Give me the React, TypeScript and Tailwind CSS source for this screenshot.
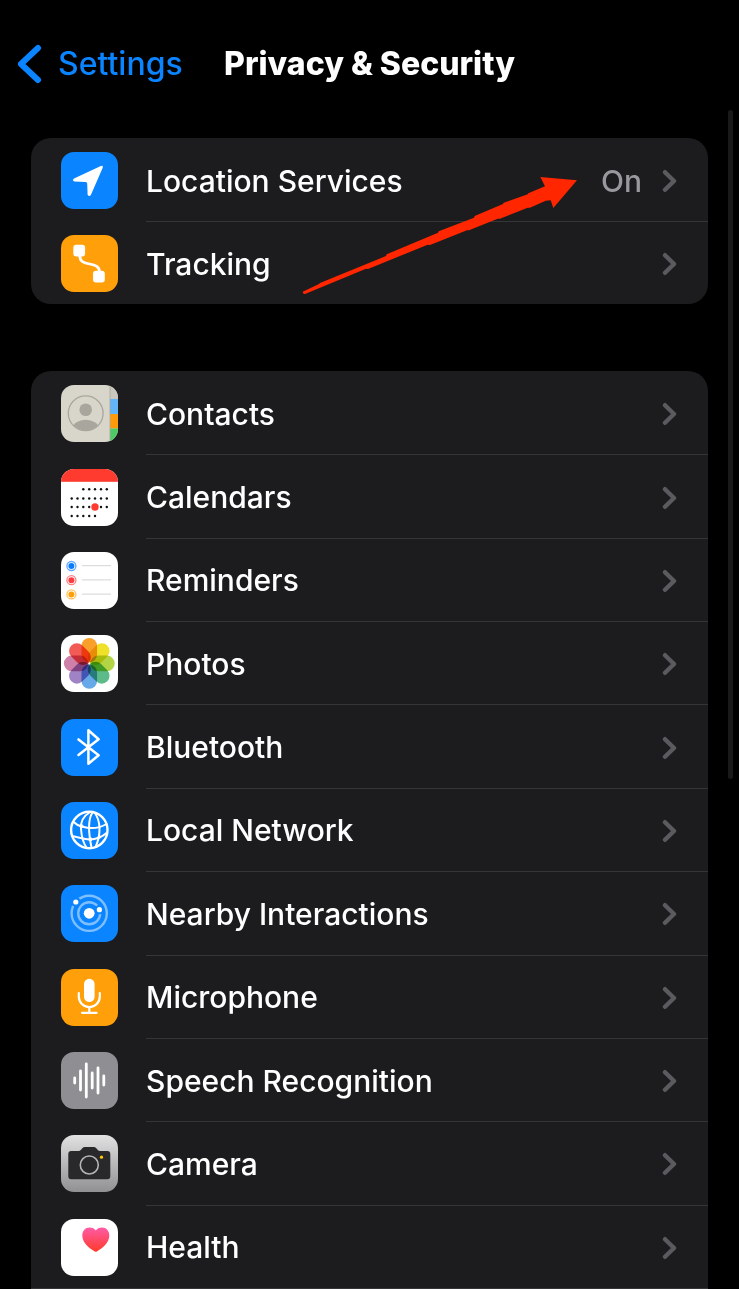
import React from "react";

type IconProps = { className?: string; children: React.ReactNode };

const AppIcon: React.FC<IconProps> = ({ className = "", children }) => (
  <span className={`block size-[57px] shrink-0 overflow-hidden rounded-[13px] ${className}`}>
    <svg viewBox="0 0 57 57" className="block size-full" fill="none" aria-hidden="true">
      {children}
    </svg>
  </span>
);

const LocationIcon = () => (
  <AppIcon className="bg-[#0a84ff]">
    <path
      d="M13 26.4 39.8 14Q42.8 13 41.6 16L30 42.8Q28.3 45.2 26.6 42.8L26.2 31.6Q26.1 30 24.6 29.9L13.4 29.5Q10.8 28.4 13 26.4Z"
      fill="#fff"
    />
  </AppIcon>
);

const TrackingIcon = () => (
  <AppIcon className="bg-[#ff9f0a]">
    <rect x="12.3" y="9.7" width="11.8" height="11.8" rx="3" fill="#fff" />
    <rect x="32" y="35.7" width="11.8" height="11.8" rx="3" fill="#fff" />
    <path d="M18.8 21C18.8 33 38.5 25 38.5 37" stroke="#fff" strokeWidth="2.8" />
  </AppIcon>
);

const ContactsIcon = () => (
  <AppIcon className="bg-[#d8d5ca]">
    <clipPath id="contact-face">
      <circle cx="24.7" cy="28.3" r="17.3" />
    </clipPath>
    <rect x="49" width="8" height="14" fill="#c9c7be" />
    <rect x="49" y="14" width="8" height="15" fill="#62b5f8" />
    <rect x="49" y="29" width="8" height="14.5" fill="#ff9b0b" />
    <rect x="49" y="43.5" width="8" height="14" fill="#4fc965" />
    <path d="M49 0V57" stroke="#aaa79d" strokeWidth="0.8" />
    <g clipPath="url(#contact-face)" fill="#a9a69d">
      <circle cx="24.7" cy="24.7" r="6.3" />
      <ellipse cx="24.7" cy="43.4" rx="13" ry="8.7" />
    </g>
    <circle cx="24.7" cy="28.3" r="17.4" stroke="#a9a69d" strokeWidth="1.3" />
  </AppIcon>
);

const calendarColumns = [10.7, 16.5, 22.3, 28.2, 34, 40, 45.8];
const calendarRows = [
  { y: 20.3, from: 2, to: 6 },
  { y: 29.5, from: 0, to: 6 },
  { y: 38, from: 0, to: 6 },
  { y: 47, from: 0, to: 4 },
];

const CalendarIcon = () => (
  <AppIcon className="bg-white">
    <rect width="57" height="12.8" fill="#ff3b30" />
    {calendarRows.map((row) =>
      calendarColumns
        .slice(row.from, row.to + 1)
        .map((x) => <circle key={`${x}-${row.y}`} cx={x} cy={row.y} r="1.2" fill="#111" />)
    )}
    <circle cx="34" cy="38" r="3.7" fill="#ff3b30" />
  </AppIcon>
);

const RemindersIcon = () => (
  <AppIcon className="bg-white">
    {[
      { y: 14, color: "#0a7aff" },
      { y: 28.2, color: "#ff3b3f" },
      { y: 42.4, color: "#ff9f0a" },
    ].map(({ y, color }) => (
      <g key={y}>
        <circle cx="10.4" cy={y} r="4.5" stroke={color} strokeOpacity="0.65" strokeWidth="1.3" />
        <circle cx="10.4" cy={y} r="3" fill={color} />
        <path d={`M20.8 ${y - 0.3}H50`} stroke="#d4d4d6" />
      </g>
    ))}
  </AppIcon>
);

const petals = ["#f9a02b", "#efe12a", "#b3d444", "#5dbb89", "#66a8e8", "#9f83c4", "#cf80a8", "#f25a55"];

const PhotosIcon = () => (
  <AppIcon className="bg-white">
    {petals.map((color, i) => (
      <rect
        key={color}
        x="20.5"
        y="3"
        width="15.6"
        height="24.4"
        rx="7.8"
        fill={color}
        transform={`rotate(${i * 45} 28.3 28.4)`}
        className="mix-blend-multiply"
      />
    ))}
  </AppIcon>
);

const BluetoothIcon = () => (
  <AppIcon className="bg-[#0a84ff]">
    <path
      d="M17.5 20.4 37.6 36.2 27.4 44.8V11.2L37.6 20.2 17.5 36"
      stroke="#fff"
      strokeWidth="2.5"
      strokeLinecap="round"
      strokeLinejoin="round"
    />
  </AppIcon>
);

const NetworkIcon = () => (
  <AppIcon className="bg-[#0a84ff]">
    <g stroke="#fff" strokeWidth="2">
      <circle cx="28.3" cy="28" r="18.2" strokeWidth="2.4" />
      <path d="M28.5 10.5C22.5 14 19.5 20 20 27 20.5 34 21.5 40 25.5 45.5" />
      <path d="M31.5 10.5C26.5 18 27.5 31 30.5 45.5" />
      <path d="M33.5 10.5C40 19 40 33 34.5 45" />
      <path d="M12 19.5Q16 23.5 21 24.5C29 27 38 26.5 45.5 22" />
      <path d="M11 34C19 35.5 24 38 30 37.5S41 35 45.5 31" />
    </g>
    <circle cx="20.5" cy="24.3" r="2" fill="#fff" />
    <circle cx="29.3" cy="37.3" r="2" fill="#fff" />
    <circle cx="38.3" cy="35" r="1.7" fill="#fff" />
  </AppIcon>
);

const NearbyIcon = () => (
  <AppIcon className="bg-[#0a84ff]">
    <circle cx="28.2" cy="28.3" r="17.6" stroke="#7fbfff" strokeWidth="2.4" />
    <circle cx="28.2" cy="28.3" r="11" stroke="#7fbfff" strokeWidth="2.4" />
    <circle cx="14.8" cy="17" r="4.8" fill="#0a84ff" />
    <circle cx="38.4" cy="24.7" r="4.6" fill="#0a84ff" />
    <circle cx="28.2" cy="28.3" r="5.4" fill="#fff" />
    <circle cx="14.8" cy="17" r="2.6" fill="#fff" />
    <circle cx="38.4" cy="24.7" r="2.6" fill="#fff" />
  </AppIcon>
);

const MicrophoneIcon = () => (
  <AppIcon className="bg-[#ff9f0a]">
    <rect x="23" y="9.7" width="10.6" height="23.3" rx="5.3" fill="#fff" />
    <path
      d="M17.8 24V27.5A10.5 10.5 0 0 0 38.8 27.5V24M28.3 38V43.6M21 43.8H35.6"
      stroke="#fff"
      strokeWidth="2.2"
      strokeLinecap="round"
    />
  </AppIcon>
);

const SpeechIcon = () => (
  <AppIcon className="bg-[#8e8e93]">
    <path
      d="M13.7 26V31M19.5 19V38M25.3 11.8V45M31.2 21V36M37 15.8V41M42.8 24V33"
      stroke="#fff"
      strokeWidth="2.8"
      strokeLinecap="round"
    />
  </AppIcon>
);

const CameraIcon = () => (
  <AppIcon className="bg-linear-to-b from-[#e2e2e3] to-[#919193]">
    <path
      d="M10.3 16H17.5Q19 16 20 14.8L21.3 13.2Q22.3 12 24 12H32.6Q34.3 12 35.3 13.2L36.6 14.8Q37.6 16 39 16H46.3Q49.3 16 49.3 19V41.3Q49.3 44.3 46.3 44.3H10.3Q7.3 44.3 7.3 41.3V19Q7.3 16 10.3 16Z"
      fill="#29292b"
    />
    <circle cx="28.3" cy="30" r="9" stroke="#b4b4b6" strokeWidth="1.6" />
    <circle cx="40.5" cy="22.2" r="1.6" fill="#ffc800" />
  </AppIcon>
);

const HealthIcon = () => (
  <AppIcon className="bg-white">
    <linearGradient id="heart" x1="0" y1="0" x2="0" y2="1">
      <stop stopColor="#ff5ba6" />
      <stop offset="1" stopColor="#ff3a2a" />
    </linearGradient>
    <path
      d="M34.8 11.4C36.6 9.2 38.8 8.6 41 8.6 45.4 8.6 48.3 12 48.3 16.6 48.3 23.5 42 29 35.8 32.5Q34.8 33 33.8 32.5C27.6 29 21.3 23.5 21.3 16.6 21.3 12 24.2 8.6 28.6 8.6 30.8 8.6 33 9.2 34.8 11.4Z"
      fill="url(#heart)"
    />
  </AppIcon>
);

const Chevron = () => (
  <svg viewBox="0 0 15 24" className="h-6 w-[15px] shrink-0" fill="none" aria-hidden="true">
    <path d="M3 3.2 12 12 3 20.8" stroke="#5b5b5f" strokeWidth="4.4" strokeLinecap="round" strokeLinejoin="round" />
  </svg>
);

type RowProps = { icon: React.ReactNode; label: string; value?: string };

const SettingsRow: React.FC<RowProps> = ({ icon, label, value }) => (
  <li className="group flex min-h-[83px] flex-1">
    <a href="#" className="flex flex-1 items-stretch gap-7 pl-[30px]">
      <span className="flex items-center pt-0.5">{icon}</span>
      <span className="flex flex-1 items-center border-t border-[#353538] pt-0.5 pr-[31px] group-first:border-transparent">
        <span className="flex-1 text-[30px] font-medium text-white">{label}</span>
        {value && <span className="mr-5 text-[30px] font-medium text-[#98989d]">{value}</span>}
        <Chevron />
      </span>
    </a>
  </li>
);

const access: RowProps[] = [
  { icon: <LocationIcon />, label: "Location Services", value: "On" },
  { icon: <TrackingIcon />, label: "Tracking" },
];

const apps: RowProps[] = [
  { icon: <ContactsIcon />, label: "Contacts" },
  { icon: <CalendarIcon />, label: "Calendars" },
  { icon: <RemindersIcon />, label: "Reminders" },
  { icon: <PhotosIcon />, label: "Photos" },
  { icon: <BluetoothIcon />, label: "Bluetooth" },
  { icon: <NetworkIcon />, label: "Local Network" },
  { icon: <NearbyIcon />, label: "Nearby Interactions" },
  { icon: <MicrophoneIcon />, label: "Microphone" },
  { icon: <SpeechIcon />, label: "Speech Recognition" },
  { icon: <CameraIcon />, label: "Camera" },
  { icon: <HealthIcon />, label: "Health" },
];

const App: React.FC = () => {
  return (
    <div className="relative flex min-h-screen flex-col bg-black font-['Inter',sans-serif]">
      <header className="grid grid-cols-[1fr_auto_1fr] items-center px-[17px] pt-10 pb-[50px]">
        <a href="#" className="flex items-center gap-4 text-[32px] leading-12 font-medium text-[#0a84ff]">
          <svg viewBox="0 0 25 40" className="h-10 w-[25px]" fill="none" aria-hidden="true">
            <path d="M21 4 4 20 21 36" stroke="currentColor" strokeWidth="6" strokeLinecap="round" strokeLinejoin="round" />
          </svg>
          Settings
        </a>
        <h1 className="text-[32px] leading-12 font-extrabold text-white">Privacy &amp; Security</h1>
      </header>

      <main className="flex flex-1 flex-col gap-[67px] px-[31px]">
        <section className="relative">
          <ul className="flex flex-col rounded-[20px] bg-[#1c1c1e]">
            {access.map((row) => (
              <SettingsRow key={row.label} {...row} />
            ))}
          </ul>

          {/* Arrow pointing at the current value */}
          <svg
            viewBox="302 176 276 119"
            className="pointer-events-none absolute top-[38px] right-[130px] h-[119px] w-[276px]"
            aria-hidden="true"
          >
            <path
              d="M302.7 291.7 319 284 320 283 386 256 386.7 254.3 438 232.7 438.7 231.3 474 217.7 474.7 216 503 204 503.7 202.7 527.7 194.3 528.3 193.3 545 186.3 540.3 177 577 180.3 553.3 208 550.7 200.3 545.7 200.7 530 207.7 527.7 207.7 500 218.7 497.7 218.7 469 230.3 467 230.3 430 245 427.7 244.7 368 269 366 268.7 305 294Q303 294.5 302.7 291.7Z"
              fill="#ff2600"
            />
          </svg>
        </section>

        <ul className="flex flex-1 flex-col rounded-t-[20px] border-b border-[#353538] bg-[#1c1c1e]">
          {apps.map((row) => (
            <SettingsRow key={row.label} {...row} />
          ))}
        </ul>
      </main>

      {/* Scroll indicator */}
      <div className="absolute top-[110px] right-1.5 h-[669px] w-[5px] rounded-full bg-[#19191a]" />
    </div>
  );
};

export default App;
